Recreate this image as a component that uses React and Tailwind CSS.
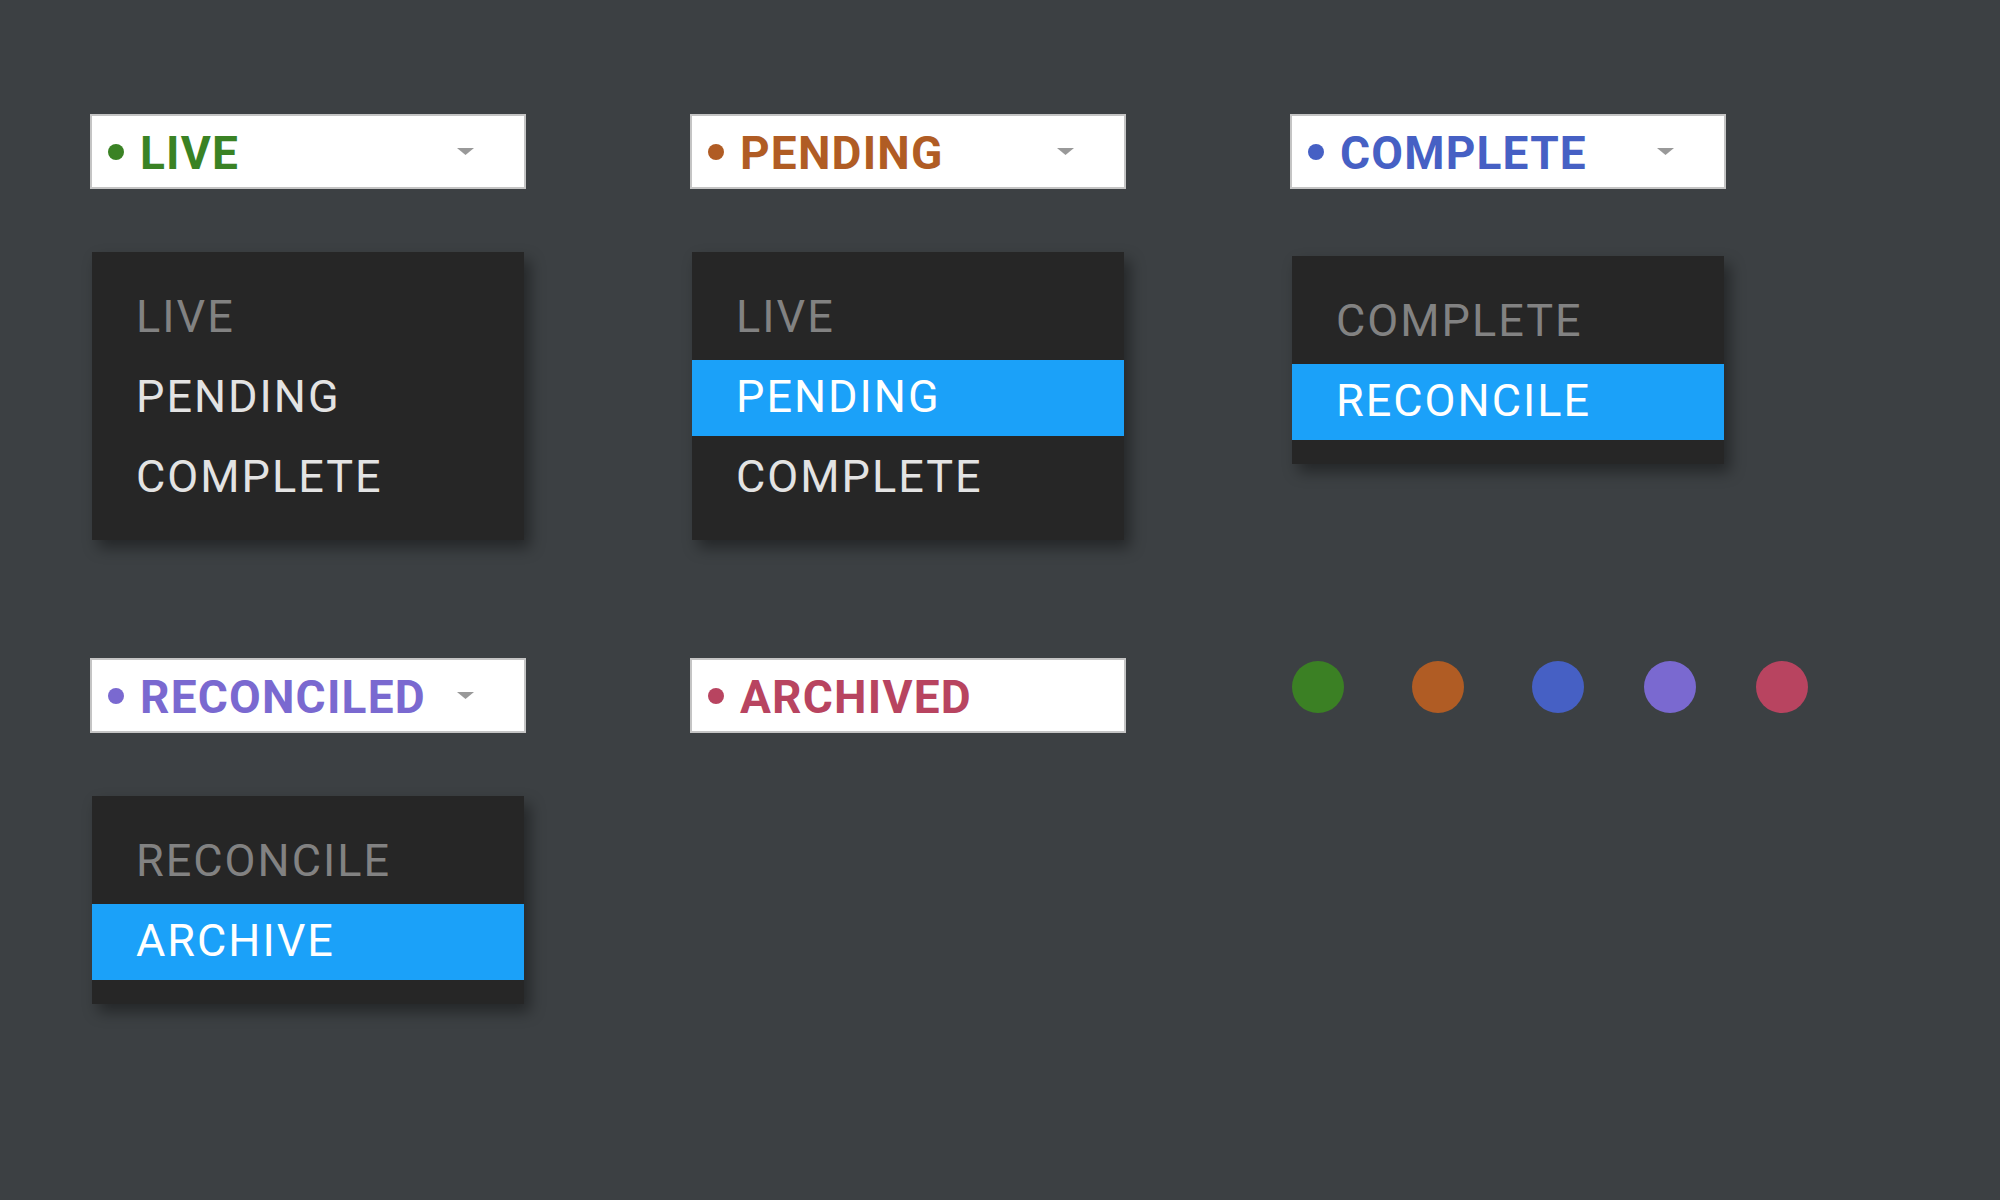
import React from 'react';

const statuses = {
    live: { label: 'LIVE', text: 'text-[#3a8224]', dot: 'bg-[#3a8224]' },
    pending: { label: 'PENDING', text: 'text-[#b05c24]', dot: 'bg-[#b05c24]' },
    complete: { label: 'COMPLETE', text: 'text-[#4660c4]', dot: 'bg-[#4660c4]' },
    reconciled: { label: 'RECONCILED', text: 'text-[#7a69d0]', dot: 'bg-[#7a69d0]' },
    archived: { label: 'ARCHIVED', text: 'text-[#b84460]', dot: 'bg-[#b84460]' }
};

const StatusSelect = ({ status, caret = true }) => {
    const s = statuses[status];
    return (
        <div className="w-[436px] h-[75px] bg-white border-2 border-[#c4c4c4] flex items-center pl-[16px] pr-[50px]">
            <span className={`w-4 h-4 rounded-full ${s.dot}`}></span>
            <span className={`ml-[16px] pt-[2px] text-[46px] font-bold leading-none tracking-[1.2px] ${s.text}`}>{s.label}</span>
            {caret && (
                <svg className="ml-auto" width="17" height="8" viewBox="0 0 17 8">
                    <path d="M0 0 L17 0 L8.5 7 Z" fill="#999999" />
                </svg>
            )}
        </div>
    );
};

const Menu = ({ items, className = '' }) => (
    <div className={`w-[432px] mx-[2px] bg-[#262626] pt-[28px] pb-[24px] flex flex-col gap-[4px] shadow-[6px_8px_14px_rgba(0,0,0,0.4)] ${className}`}>
        {items.map((item) => (
            <div
                key={item.label}
                className={`h-[76px] flex items-center px-[44px] pb-[3px] text-[45px] leading-none tracking-[2px] ${item.disabled
                    ? 'text-[#828282]'
                    : item.active
                        ? 'bg-[#1ba1f9] text-white'
                        : 'text-[#e3e3e3]'
                    }`}
            >
                {item.label}
            </div>
        ))}
    </div>
);

const App = () => {
    const swatches = ['bg-[#3b8024]', 'bg-[#b05c24]', 'bg-[#4660c4]', 'bg-[#7a69d0]', 'bg-[#b84460]'];

    return (
        <div className="w-[2000px] h-[1200px] bg-[#3c4043] pl-[90px] pt-[114px] font-['Roboto',sans-serif]">
            <div className="flex gap-[164px] h-[544px] items-start">
                <div className="flex flex-col gap-[63px]">
                    <StatusSelect status="live" />
                    <Menu
                        items={[
                            { label: 'LIVE', disabled: true },
                            { label: 'PENDING' },
                            { label: 'COMPLETE' }
                        ]}
                    />
                </div>
                <div className="flex flex-col gap-[63px]">
                    <StatusSelect status="pending" />
                    <Menu
                        items={[
                            { label: 'LIVE', disabled: true },
                            { label: 'PENDING', active: true },
                            { label: 'COMPLETE' }
                        ]}
                    />
                </div>
                <div className="flex flex-col gap-[67px]">
                    <StatusSelect status="complete" />
                    <Menu
                        items={[
                            { label: 'COMPLETE', disabled: true },
                            { label: 'RECONCILE', active: true }
                        ]}
                    />
                </div>
            </div>

            <div className="flex gap-[164px] items-start">
                <div className="flex flex-col gap-[63px]">
                    <StatusSelect status="reconciled" />
                    <Menu
                        items={[
                            { label: 'RECONCILE', disabled: true },
                            { label: 'ARCHIVE', active: true }
                        ]}
                    />
                </div>
                <div>
                    <StatusSelect status="archived" caret={false} />
                </div>
                <div className="flex items-center gap-[68px] pt-[3px] pl-[2px]">
                    {swatches.map((c, i) => (
                        <span key={c} className={`w-[52px] h-[52px] rounded-full ${c} ${i >= 3 ? '-ml-[8px]' : ''}`}></span>
                    ))}
                </div>
            </div>
        </div>
    );
};

export default App;
